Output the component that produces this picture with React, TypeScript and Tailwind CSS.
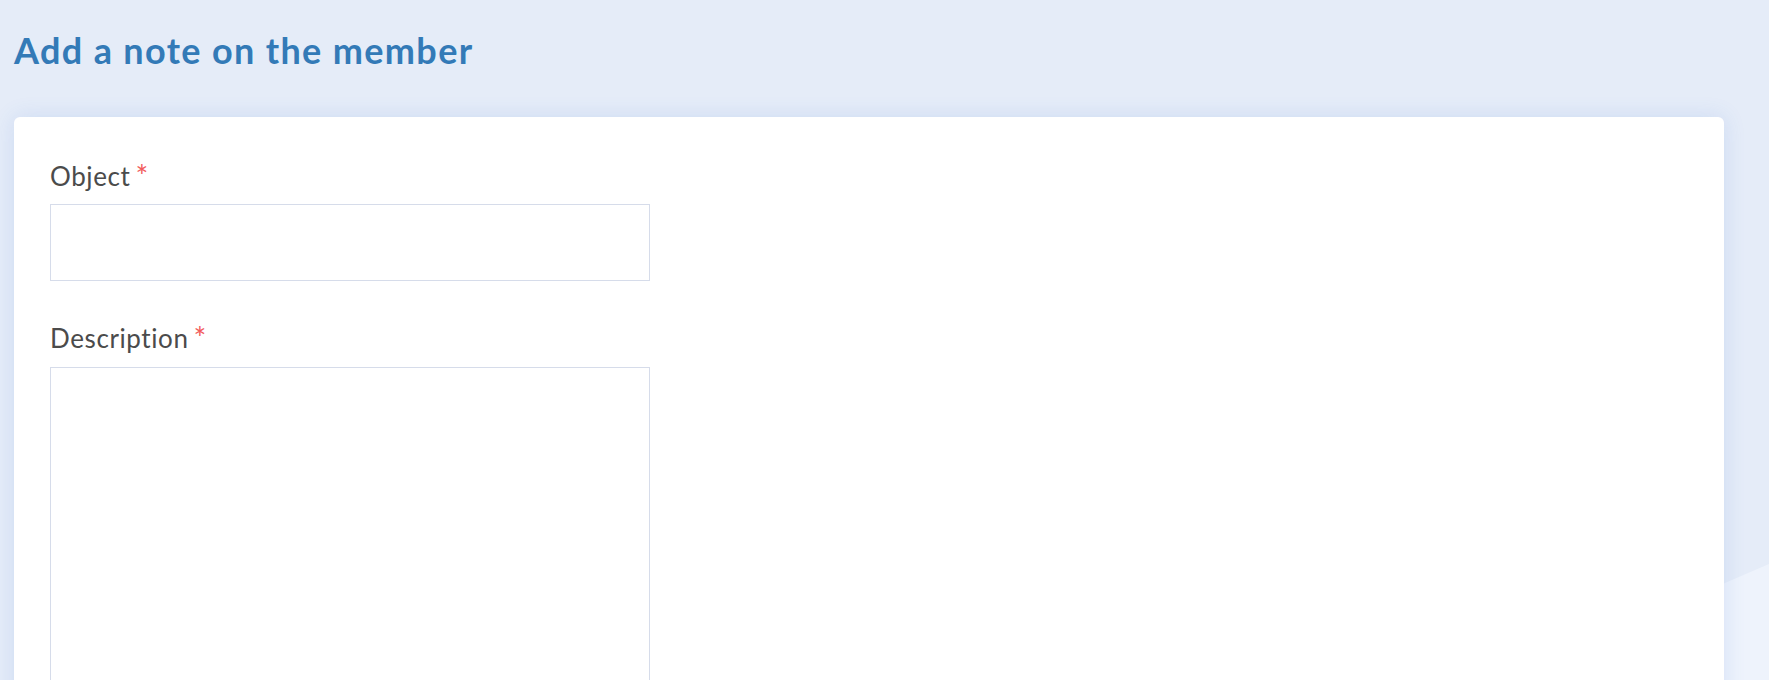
import React from "react";

export default function App() {
  return (
    <div className="relative min-h-[680px] overflow-hidden bg-[#e5ecf8]" style={{ fontFamily: "Lato, 'Noto Sans', sans-serif" }}>
      <svg className="pointer-events-none absolute left-0 top-0 h-[680px] w-[1769px]" viewBox="0 0 1769 680">
        <polygon points="1500,680 1769,564 1769,680" fill="#eef3fc" />
      </svg>
      <div className="relative pl-[14px] pr-[45px]">
        <h1 className="h-[117px] pt-[27px] text-[36px] font-bold leading-[46px] tracking-[1.35px] text-[#337ab7]">
          Add a note on the member
        </h1>
        <div className="rounded-[6px] bg-white px-[36px] pb-[80px] pt-[40px] shadow-[0_0_22px_rgba(60,110,210,0.14)]">
          <div className="flex flex-col">
            <label className="flex items-start text-[26px] leading-[38px] tracking-[0.6px] text-[#4b4b4b]">
              Object<span className="ml-[5px] text-[30px] leading-[36px] text-[#f25c5c]">*</span>
            </label>
            <input className="mt-[9px] h-[77px] w-[600px] border border-[#d6dcea] bg-white outline-none" />
            <label className="mt-[38px] flex items-start text-[26px] leading-[38px] tracking-[0.6px] text-[#4b4b4b]">
              Description<span className="ml-[5px] text-[30px] leading-[36px] text-[#f25c5c]">*</span>
            </label>
            <textarea className="mt-[10px] h-[420px] w-[600px] resize-none border border-[#d6dcea] bg-white outline-none" />
          </div>
        </div>
      </div>
    </div>
  );
}
